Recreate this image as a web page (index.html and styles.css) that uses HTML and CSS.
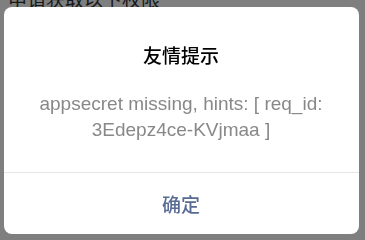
FILE: index.html
```html
<!DOCTYPE html>
<html lang="zh-CN">
<head>
<meta charset="utf-8">
<link rel="stylesheet" href="styles.css">
</head>
<body>
<div class="page">
  <p class="perm">申请获取以下权限</p>
</div>
<div class="mask">
  <div class="dialog">
    <div class="dialog-hd">友情提示</div>
    <div class="dialog-bd">appsecret missing, hints: [ req_id: 3Edepz4ce-KVjmaa ]</div>
    <div class="dialog-ft">
      <a class="btn">确定</a>
    </div>
  </div>
</div>
</body>
</html>
```
FILE: styles.css
```css
html, body {
  margin: 0;
  padding: 0;
  background: #fff;
  width: 365px;
  height: 239px;
  overflow: hidden;
  font-family: "Liberation Sans", "Noto Sans CJK SC", sans-serif;
}
.page {
  padding-left: 8px;
}
.perm {
  margin: -11px 0 0 0;
  font-size: 19px;
  line-height: 19px;
  color: #333;
  font-family: "Noto Sans CJK SC", sans-serif;
}
.mask {
  position: fixed;
  inset: 0;
  background: rgba(0, 0, 0, 0.5);
  display: flex;
  padding: 7px 0 5px 3.5px;
  box-sizing: border-box;
}
.dialog {
  width: 355px;
  height: 227px;
  background: #fff;
  border-radius: 8px;
  display: flex;
  flex-direction: column;
  overflow: hidden;
}
.dialog-hd {
  padding-top: 36px;
  font-family: "Noto Sans CJK SC", sans-serif;
  font-size: 19px;
  font-weight: 500;
  line-height: 24px;
  color: #000;
  text-align: center;
}
.dialog-bd {
  margin-top: 24px;
  padding: 0 20px 29px;
  font-size: 19px;
  line-height: 26px;
  color: #888;
  text-align: center;
  border-bottom: 1px solid #e6e6e6;
}
.dialog-ft {
  flex: 1;
  display: flex;
  align-items: center;
  justify-content: center;
}
.btn {
  font-family: "Noto Sans CJK SC", sans-serif;
  font-size: 19px;
  font-weight: 500;
  color: #576b95;
}
```
